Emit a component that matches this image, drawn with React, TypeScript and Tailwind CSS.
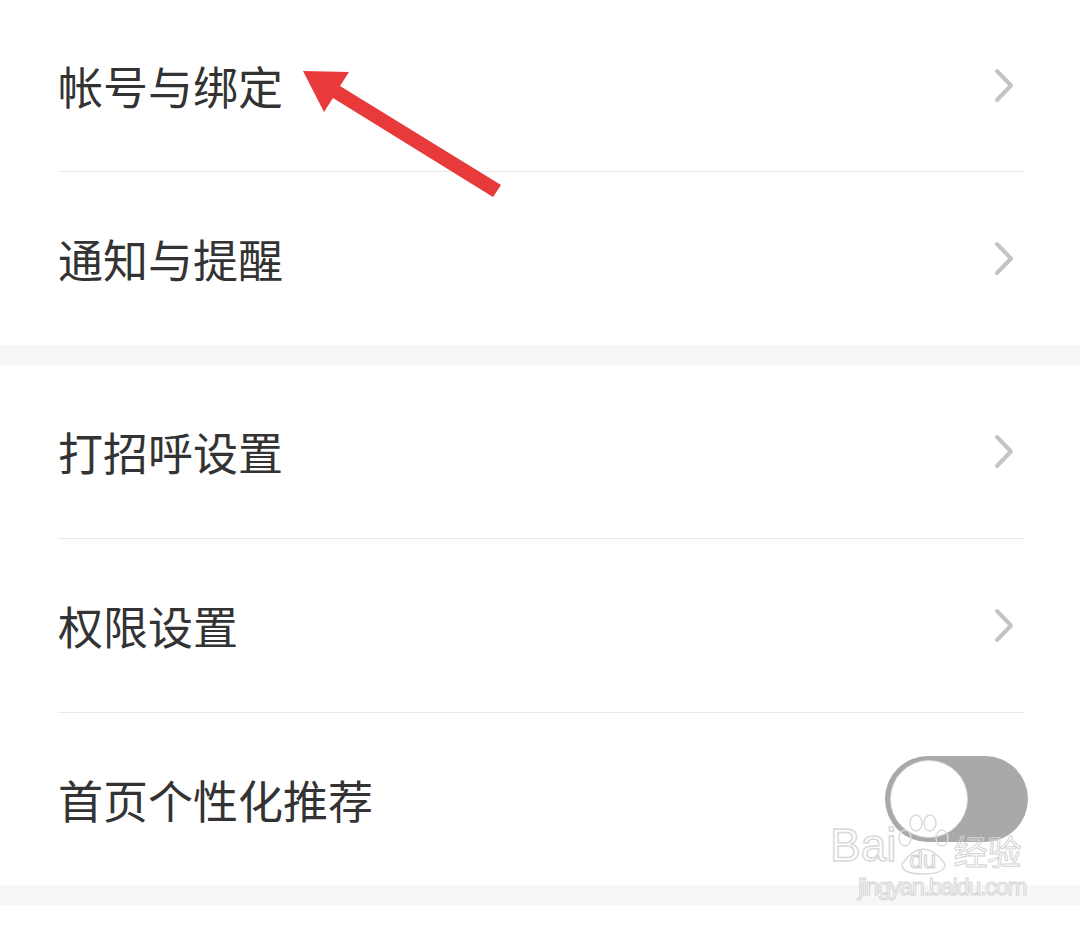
import type { ReactNode } from "react"

const font = { fontFamily: '"Noto Sans CJK SC", "Noto Sans", sans-serif' }
const latin = { fontFamily: '"Liberation Sans", sans-serif' }

function Chevron() {
  return (
    <svg width="21" height="35" viewBox="0 0 21 35" className="mr-[65px]">
      <polyline
        points="3,3 17,17.5 3,32"
        fill="none"
        stroke="#c4c4c4"
        strokeWidth="4"
        strokeLinecap="round"
        strokeLinejoin="round"
      />
    </svg>
  )
}

function Toggle() {
  return (
    <div className="mr-[52px] flex h-[86px] w-[143px] items-center rounded-full bg-[#a9a9a9] pl-[5px]">
      <div className="h-[78px] w-[78px] rounded-full border border-[#d8d8d8] bg-white" />
    </div>
  )
}

function Row({ label, h, right }: { label: string; h: string; right: ReactNode }) {
  return (
    <div className={`flex items-center justify-between bg-white pl-[58px] ${h}`}>
      <span className="text-[45px] leading-none text-[#333333]" style={font}>
        {label}
      </span>
      {right}
    </div>
  )
}

const Divider = () => <div className="ml-[58px] mr-[56px] h-px bg-[#e9e9e9]" />
const Band = () => <div className="h-[20px] bg-[#f7f7f7]" />

// watermark stamp lying over the bottom-right corner
function Watermark() {
  return (
    <div className="pointer-events-none absolute left-[830px] top-[812px] flex flex-col">
      <div className="flex items-end">
        <span
          className="mb-[8px] text-[46px] leading-none text-transparent [-webkit-text-stroke:1.5px_#d9d9d9]"
          style={latin}
        >
          Bai
        </span>
        <div className="relative h-[64px] w-[54px]">
          <svg width="54" height="64" viewBox="0 0 54 64">
            <ellipse cx="9" cy="26" rx="6" ry="8" fill="none" stroke="#dadada" strokeWidth="1.5" />
            <ellipse cx="20" cy="11" rx="6" ry="8" fill="none" stroke="#dadada" strokeWidth="1.5" />
            <ellipse cx="34" cy="11" rx="6" ry="8" fill="none" stroke="#dadada" strokeWidth="1.5" />
            <ellipse cx="46" cy="26" rx="6" ry="8" fill="none" stroke="#dadada" strokeWidth="1.5" />
            <path d="M6 52 Q27 22 49 52 Q49 62 27 62 Q5 62 6 52 Z" fill="none" stroke="#dadada" strokeWidth="1.5" />
          </svg>
          <span
            className="absolute bottom-[4px] left-[13px] text-[24px] leading-none text-transparent [-webkit-text-stroke:1px_#d0d0d0]"
            style={latin}
          >
            du
          </span>
        </div>
        <span
          className="mb-[8px] ml-[3px] text-[34px] leading-none text-transparent [-webkit-text-stroke:1px_#d4d4d4]"
          style={font}
        >
          经验
        </span>
      </div>
      <span
        className="-mt-[1px] ml-[28px] text-[24px] leading-none tracking-[-1.5px] text-transparent [-webkit-text-stroke:1px_#d6d6d6]"
        style={latin}
      >
        jingyan.baidu.com
      </span>
    </div>
  )
}

export default function App() {
  return (
    <div className="relative h-[928px] w-[1080px] overflow-hidden bg-white">
      <Row label="帐号与绑定" h="h-[171px]" right={<Chevron />} />
      <Divider />
      <Row label="通知与提醒" h="h-[173px]" right={<Chevron />} />
      <Band />
      <Row label="打招呼设置" h="h-[173px]" right={<Chevron />} />
      <Divider />
      <Row label="权限设置" h="h-[173px]" right={<Chevron />} />
      <Divider />
      <Row label="首页个性化推荐" h="h-[172px]" right={<Toggle />} />
      <Band />

      {/* red annotation arrow */}
      <svg className="pointer-events-none absolute left-0 top-0" width="1080" height="928">
        <polygon
          points="303,71 349,72 340,86 501,185 493,197 333,98 324,112"
          fill="#e8393b"
        />
      </svg>

      <Watermark />
    </div>
  )
}
